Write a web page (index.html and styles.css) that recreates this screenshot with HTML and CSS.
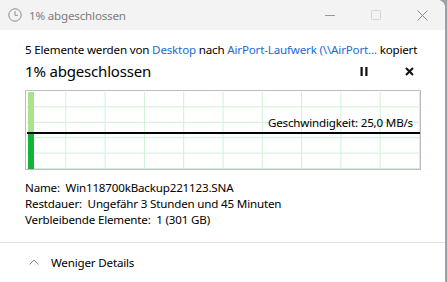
FILE: index.html
```html
<!DOCTYPE html>
<html lang="de">
<head>
  <meta charset="UTF-8">
  <title>1% abgeschlossen</title>
  <link rel="stylesheet" href="styles.css">
</head>
<body>
  <div class="window">
    <div class="titlebar">
      <svg class="title-icon" width="14" height="14" viewBox="0 0 14 14">
        <circle cx="7" cy="7" r="6.2" fill="none" stroke="#8a8a8a" stroke-width="1"/>
        <path d="M7 3.2V7.3H9.8" fill="none" stroke="#8a8a8a" stroke-width="1"/>
      </svg>
      <span class="title-text">1% abgeschlossen</span>
      <div class="caption-buttons">
        <span class="cap-btn">
          <svg width="10" height="10" viewBox="0 0 10 10"><path d="M0 5.5H10" stroke="#9a9a9a" stroke-width="1"/></svg>
        </span>
        <span class="cap-btn">
          <svg width="10" height="10" viewBox="0 0 10 10"><rect x="0.5" y="0.5" width="9" height="9" rx="1" fill="none" stroke="#d6d6d6" stroke-width="1"/></svg>
        </span>
        <span class="cap-btn">
          <svg width="11" height="11" viewBox="0 0 11 11"><path d="M0.5 0.5L10.5 10.5M10.5 0.5L0.5 10.5" stroke="#8a8a8a" stroke-width="1"/></svg>
        </span>
      </div>
    </div>

    <div class="content">
      <p class="summary">5 Elemente werden von <span class="link">Desktop</span> nach <span class="link">AirPort-Laufwerk (\\AirPort...</span> kopiert</p>
      <div class="status-row">
        <h1 class="status">1% abgeschlossen</h1>
        <div class="actions">
          <svg width="8" height="9" viewBox="0 0 8 9"><rect x="0.5" y="0" width="2.2" height="9" fill="#111"/><rect x="5.3" y="0" width="2.2" height="9" fill="#111"/></svg>
          <svg width="9" height="9" viewBox="0 0 9 9"><path d="M1 1L8 8M8 1L1 8" stroke="#111" stroke-width="2"/></svg>
        </div>
      </div>

      <div class="graph">
        <div class="bar">
          <div class="bar-past"></div>
          <div class="bar-now"></div>
        </div>
        <div class="speed-line"></div>
        <span class="speed">Geschwindigkeit: 25,0 MB/s</span>
      </div>

      <div class="details">
        <div>Name:&nbsp; Win118700kBackup221123.SNA</div>
        <div>Restdauer:&nbsp; Ungefähr 3 Stunden und 45 Minuten</div>
        <div>Verbleibende Elemente:&nbsp; 1 (301 GB)</div>
      </div>
    </div>

    <div class="footer">
      <svg width="10" height="6" viewBox="0 0 10 6"><path d="M0.5 5.5L5 1L9.5 5.5" fill="none" stroke="#8a8a8a" stroke-width="1"/></svg>
      <span>Weniger Details</span>
    </div>
  </div>
</body>
</html>
```

FILE: styles.css
```css
body {
  margin: 0;
  background-color: #9da1a6;
  font-family: "Noto Sans", "Open Sans", sans-serif;
  color: #000;
  height: 282px;
  overflow: hidden;
  letter-spacing: -0.18px;
}

.window {
  width: 445px;
  height: 282px;
  background-color: #fff;
  border-top-right-radius: 8px;
  overflow: hidden;
}

.titlebar {
  height: 30px;
  background-color: #f3f3f3;
  display: flex;
  align-items: center;
  padding-left: 8px;
}

.title-icon {
  margin-right: 7px;
}

.title-text {
  font-size: 11.6px;
  color: #7c7c7c;
  flex: 1;
}

.caption-buttons {
  display: flex;
  height: 100%;
}

.cap-btn {
  width: 46px;
  display: flex;
  align-items: center;
  justify-content: center;
}

.content {
  padding: 12px 25px 0 25px;
}

.summary {
  margin: 0;
  font-size: 11.6px;
  line-height: 16px;
  white-space: nowrap;
}

.link {
  color: #1a6bd0;
}

.status-row {
  display: flex;
  align-items: center;
  height: 24px;
  margin-top: 1px;
}

.status {
  margin: 0;
  font-size: 15px;
  font-weight: normal;
  flex: 1;
}

.actions {
  display: flex;
  align-items: center;
  gap: 37px;
  padding-right: 6px;
}

.graph {
  position: relative;
  margin-top: 7px;
  width: 393px;
  height: 77px;
  border: 1px solid #bdbdbd;
  padding: 1px 0 0 1px;
  background-color: #fff;
  background-image:
    linear-gradient(to right, transparent calc(100% - 1px), #cdf0d6 calc(100% - 1px)),
    linear-gradient(to bottom, transparent calc(100% - 1px), #cdf0d6 calc(100% - 1px));
  background-size: 10% 100%, 100% 20%;
  background-origin: content-box;
  background-clip: content-box;
}

.bar {
  display: flex;
  flex-direction: column;
  width: 6px;
  height: 100%;
  margin-left: 1px;
}

.bar-past {
  height: 42px;
  background-color: #a9e38e;
}

.bar-now {
  flex: 1;
  background-color: #14b33a;
}

.speed-line {
  position: absolute;
  left: 1px;
  right: 0;
  top: 41px;
  height: 2px;
  background-color: #000;
}

.speed {
  position: absolute;
  right: 7px;
  top: 24px;
  font-size: 11.6px;
  line-height: 16px;
}

.details {
  margin-top: 10px;
  font-size: 11.6px;
  line-height: 16px;
}

.footer {
  margin-top: 14px;
  border-top: 1px solid #e3e3e3;
  height: 38px;
  display: flex;
  align-items: center;
  padding-left: 29px;
  gap: 12px;
  font-size: 11.6px;
}
```
